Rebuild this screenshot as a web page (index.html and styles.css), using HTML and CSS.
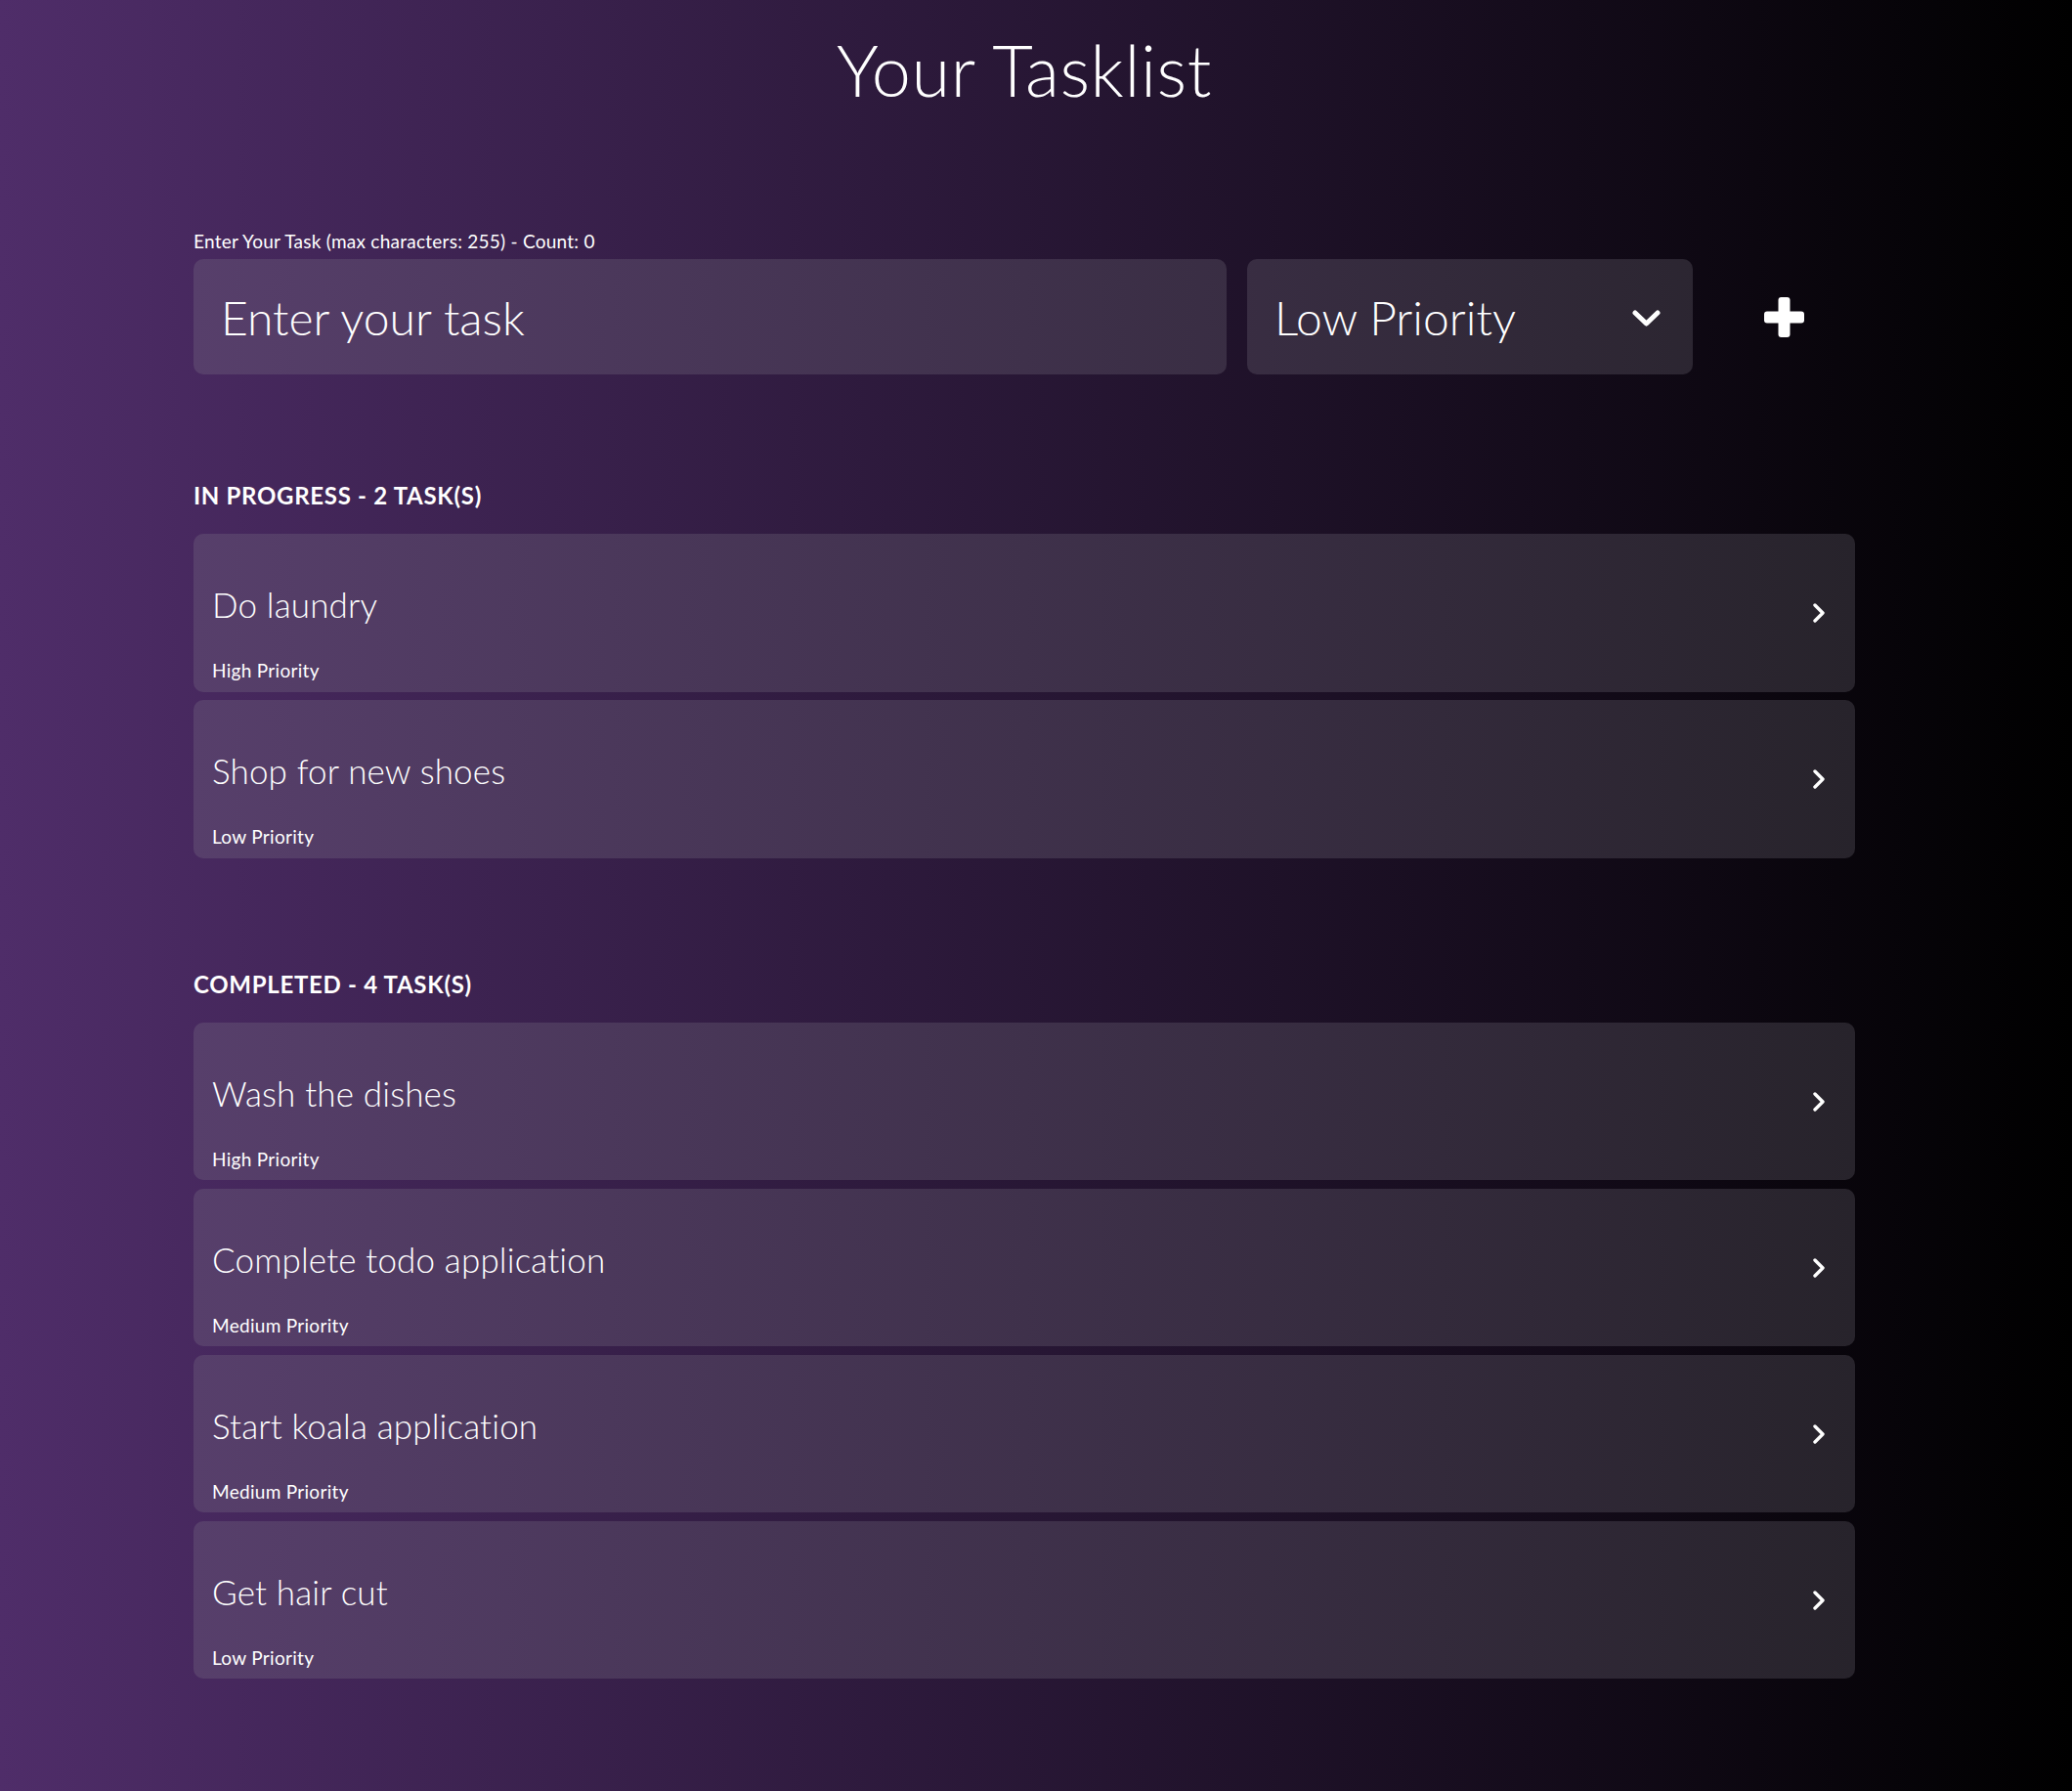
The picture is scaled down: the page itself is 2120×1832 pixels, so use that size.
FILE: index.html
```html
<!DOCTYPE html>
<html lang="en">
<head>
<meta charset="utf-8">
<title>Your Tasklist</title>
<link rel="stylesheet" href="styles.css">
</head>
<body>
<main class="app">
  <h1 class="title">Your Tasklist</h1>

  <form class="task-form">
    <label class="field-label" for="task">Enter Your Task (max characters: 255) - Count: 0</label>
    <div class="form-row">
      <input class="task-input box" id="task" type="text" placeholder="Enter your task">
      <div class="select box">
        <span>Low Priority</span>
        <svg class="chev-down" width="29" height="17" viewBox="0 0 29 17"><polyline points="3,3 14.5,14 26,3" fill="none" stroke="#fff" stroke-width="5" stroke-linecap="round" stroke-linejoin="round"/></svg>
      </div>
      <button class="add-btn" type="button" aria-label="Add task">
        <svg width="41" height="41" viewBox="0 0 41 41"><rect x="14.5" y="0" width="12" height="41" rx="3" fill="#fff"/><rect x="0" y="14.5" width="41" height="12" rx="3" fill="#fff"/></svg>
      </button>
    </div>
  </form>

  <section class="section section-progress">
    <h2 class="section-title">IN PROGRESS - 2 TASK(S)</h2>
    <ul class="cards">
      <li class="card box"><div class="card-text"><div class="card-title">Do laundry</div><div class="card-priority">High Priority</div></div><svg class="chev-right" width="12" height="20" viewBox="0 0 12 20"><polyline points="2,2 10,10 2,18" fill="none" stroke="#fff" stroke-width="3.4" stroke-linecap="round" stroke-linejoin="round"/></svg></li>
      <li class="card box"><div class="card-text"><div class="card-title">Shop for new shoes</div><div class="card-priority">Low Priority</div></div><svg class="chev-right" width="12" height="20" viewBox="0 0 12 20"><polyline points="2,2 10,10 2,18" fill="none" stroke="#fff" stroke-width="3.4" stroke-linecap="round" stroke-linejoin="round"/></svg></li>
    </ul>
  </section>

  <section class="section section-done">
    <h2 class="section-title">COMPLETED - 4 TASK(S)</h2>
    <ul class="cards">
      <li class="card box"><div class="card-text"><div class="card-title">Wash the dishes</div><div class="card-priority">High Priority</div></div><svg class="chev-right" width="12" height="20" viewBox="0 0 12 20"><polyline points="2,2 10,10 2,18" fill="none" stroke="#fff" stroke-width="3.4" stroke-linecap="round" stroke-linejoin="round"/></svg></li>
      <li class="card box"><div class="card-text"><div class="card-title">Complete todo application</div><div class="card-priority">Medium Priority</div></div><svg class="chev-right" width="12" height="20" viewBox="0 0 12 20"><polyline points="2,2 10,10 2,18" fill="none" stroke="#fff" stroke-width="3.4" stroke-linecap="round" stroke-linejoin="round"/></svg></li>
      <li class="card box"><div class="card-text"><div class="card-title">Start koala application</div><div class="card-priority">Medium Priority</div></div><svg class="chev-right" width="12" height="20" viewBox="0 0 12 20"><polyline points="2,2 10,10 2,18" fill="none" stroke="#fff" stroke-width="3.4" stroke-linecap="round" stroke-linejoin="round"/></svg></li>
      <li class="card box"><div class="card-text"><div class="card-title">Get hair cut</div><div class="card-priority">Low Priority</div></div><svg class="chev-right" width="12" height="20" viewBox="0 0 12 20"><polyline points="2,2 10,10 2,18" fill="none" stroke="#fff" stroke-width="3.4" stroke-linecap="round" stroke-linejoin="round"/></svg></li>
    </ul>
  </section>
</main>
</body>
</html>
```

FILE: styles.css
```css
* { box-sizing: border-box; }

html, body {
  margin: 0;
  padding: 0;
  height: 100%;
}

body {
  min-height: 1832px;
  background: linear-gradient(to right, #4f2d69 0%, #000000 100%);
  color: #ffffff;
  font-family: Lato, "Open Sans", "Liberation Sans", sans-serif;
  overflow: hidden;
}

.app {
  width: 1700px;
  margin-left: 198px;
  padding-top: 28px;
}

.title {
  margin: 0;
  font-size: 72px;
  line-height: 86.4px;
  font-weight: 300;
  letter-spacing: 0.6px;
  text-align: center;
}

.box {
  background-image: linear-gradient(to right, #573f6b 198px, #27232b 1898px);
  background-attachment: fixed;
  border-radius: 10px;
}

.task-form {
  margin-top: 122px;
}

.field-label {
  display: block;
  font-size: 19px;
  line-height: 21.6px;
  font-weight: 400;
  letter-spacing: 0.25px;
  margin-bottom: 7px;
}

.form-row {
  display: grid;
  grid-template-columns: 1057px 456px 1fr;
  column-gap: 21px;
  height: 118px;
}

.task-input {
  border: none;
  outline: none;
  height: 118px;
  padding: 0 28px;
  color: #fff;
  font-family: Lato, "Open Sans", "Liberation Sans", sans-serif;
  font-size: 48px;
  font-weight: 300;
}

.task-input::placeholder {
  color: #fff;
  opacity: 1;
}

.select {
  display: flex;
  align-items: center;
  justify-content: space-between;
  padding: 0 33px 0 28px;
  font-size: 48px;
  font-weight: 300;
}

.chev-down {
  display: block;
  margin-top: 2px;
}

.add-btn {
  display: flex;
  align-items: center;
  justify-content: center;
  background: none;
  border: none;
  padding: 0;
  margin: 0;
  cursor: pointer;
}

.add-btn svg {
  display: block;
  margin-top: 1px;
}

.section-progress {
  margin-top: 111px;
}

.section-done {
  margin-top: 116px;
}

.section-title {
  margin: 0 0 26px;
  font-size: 24px;
  line-height: 26.4px;
  font-weight: 700;
  letter-spacing: 0.7px;
}

.cards {
  list-style: none;
  margin: 0;
  padding: 0;
  display: flex;
  flex-direction: column;
  gap: 8.7px;
}

.card {
  height: 161.3px;
  display: flex;
  align-items: center;
  justify-content: space-between;
  padding: 0 31px 0 19px;
}

.card-text {
  align-self: stretch;
  padding-top: 51px;
  display: flex;
  flex-direction: column;
}

.card-title {
  font-size: 35px;
  line-height: 42px;
  font-weight: 300;
  letter-spacing: 0.15px;
  margin-bottom: 36px;
}

.card-priority {
  font-size: 19px;
  line-height: 21.6px;
  font-weight: 400;
  letter-spacing: 0.3px;
}

.chev-right {
  display: block;
}
```
